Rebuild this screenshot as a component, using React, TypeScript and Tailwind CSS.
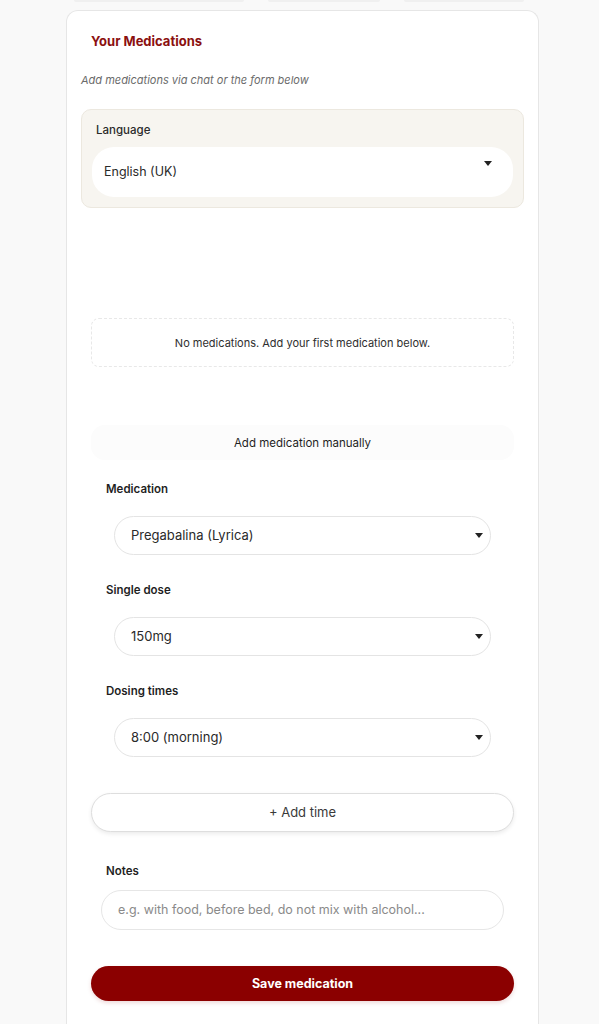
import React from 'react';

const font = { fontFamily: 'Inter, "Noto Sans", sans-serif' };

const Caret: React.FC = () => (
  <svg width="8" height="5" viewBox="0 0 8 5" className="text-[#222]">
    <path d="M0 0h8L4 5z" fill="currentColor" />
  </svg>
);

interface SelectBoxProps {
  value: string;
}

const SelectBox: React.FC<SelectBoxProps> = ({ value }) => (
  <div className="mx-[23px] flex h-[39px] items-center justify-between rounded-full border border-[#e4e4e4] bg-white pl-[16px] pr-[7px]">
    <span className="text-[13px] text-[#2a2a2a]">{value}</span>
    <Caret />
  </div>
);

const FieldLabel: React.FC<{ children: React.ReactNode }> = ({ children }) => (
  <div className="pl-[15px] text-[11.5px] font-semibold leading-[16px] text-[#1f1f1f]">{children}</div>
);

export default function App() {
  return (
    <div className="min-h-[1024px] bg-[#f9f9f9]" style={font}>
      {/* tab strip remnants above the card */}
      <div className="flex h-[2px] gap-[24px] pl-[74px]">
        <div className="h-[2px] w-[170px] rounded-b-md bg-[#f0f0f0]" />
        <div className="h-[2px] w-[112px] rounded-b-md bg-[#f0f0f0]" />
        <div className="h-[2px] w-[120px] rounded-b-md bg-[#f0f0f0]" />
      </div>

      <div className="ml-[66px] mt-[8px] w-[473px] rounded-t-[12px] border border-b-0 border-[#e6e6e6] bg-white px-[14px] pt-[21px] pb-[40px]">
        <h2 className="pl-[10px] text-[13px] font-bold leading-[18px] text-[#8b1010]">Your Medications</h2>
        <p className="mt-[22px] text-[11px] italic leading-[16px] text-[#6b6b6b]">
          Add medications via chat or the form below
        </p>

        {/* Language */}
        <div className="mt-[21px] rounded-[10px] border border-[#ece8df] bg-[#f7f5f0] px-[10px] pt-[12px] pb-[10px]">
          <div className="pl-[4px] text-[11.5px] font-medium leading-[16px] text-[#2a2a2a]">Language</div>
          <div className="relative mt-[9px] flex h-[50px] items-center rounded-[22px] bg-white pl-[12px]">
            <span className="pt-[1px] text-[12.5px] text-[#2a2a2a]">English (UK)</span>
            <div className="absolute right-[21px] top-[14px]">
              <Caret />
            </div>
          </div>
        </div>

        <div className="px-[10px]">
          {/* Empty state */}
          <div className="mt-[110px] flex h-[49px] items-center justify-center rounded-[8px] border border-dashed border-[#e8e8e8] pt-[1px]">
            <span className="text-[11px] text-[#2e2e2e]">No medications. Add your first medication below.</span>
          </div>

          {/* Manual form toggle */}
          <div className="mt-[58px] flex h-[35px] items-center justify-center rounded-[14px] bg-[#fcfcfc] pt-[2px]">
            <span className="text-[11.5px] text-[#1f1f1f]">Add medication manually</span>
          </div>

          <div className="mt-[21px]">
            <FieldLabel>Medication</FieldLabel>
            <div className="mt-[19px]">
              <SelectBox value="Pregabalina (Lyrica)" />
            </div>

            <div className="mt-[27px]">
              <FieldLabel>Single dose</FieldLabel>
            </div>
            <div className="mt-[19px]">
              <SelectBox value="150mg" />
            </div>

            <div className="mt-[27px]">
              <FieldLabel>Dosing times</FieldLabel>
            </div>
            <div className="mt-[19px]">
              <SelectBox value="8:00 (morning)" />
            </div>

            <button className="mt-[36px] flex h-[39px] w-full items-center justify-center rounded-full border border-[#dedede] bg-white pt-[1px] text-[13px] text-[#3a3a3a] shadow-[0_2px_4px_rgba(0,0,0,0.08)]">
              + Add time
            </button>

            <div className="mt-[31px]">
              <FieldLabel>Notes</FieldLabel>
            </div>
            <div className="mx-[10px] mt-[11px] flex h-[40px] items-center rounded-full border border-[#e6e6e6] bg-white pl-[16px]">
              <span className="text-[12.5px] text-[#8a8a8a]">e.g. with food, before bed, do not mix with alcohol...</span>
            </div>

            <button className="mt-[36px] flex h-[35px] w-full items-center justify-center rounded-full bg-[#8b0000] pt-[1px] text-[12.5px] font-bold text-white shadow-[0_2px_4px_rgba(139,0,0,0.15)]">
              Save medication
            </button>
          </div>
        </div>
      </div>
    </div>
  );
}
